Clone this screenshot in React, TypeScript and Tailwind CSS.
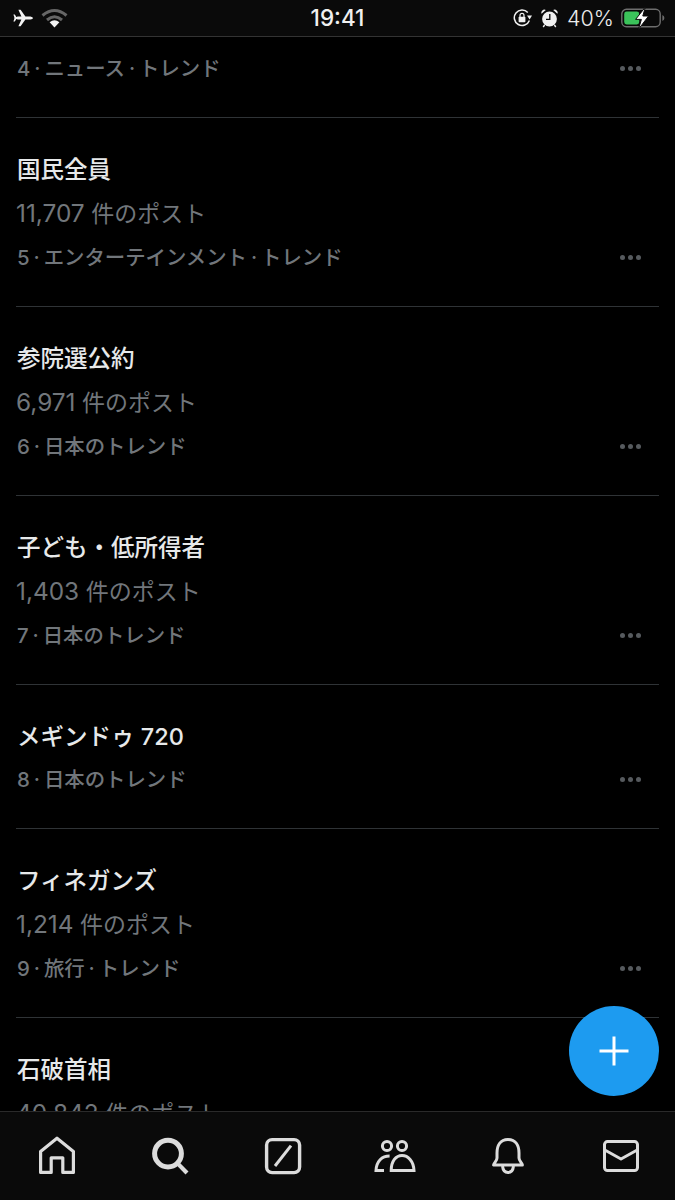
import React from 'react';

const trends = [
  { title: '国民全員', num: '11,707', meta: '5 · エンターテインメント · トレンド' },
  { title: '参院選公約', num: '6,971', meta: '6 · 日本のトレンド' },
  { title: '子ども・低所得者', num: '1,403', meta: '7 · 日本のトレンド' },
  { title: 'メギンドゥ 720', meta: '8 · 日本のトレンド' },
  { title: 'フィネガンズ', num: '1,214', meta: '9 · 旅行 · トレンド' },
  { title: '石破首相', num: '40,842', meta: '10 · 日本のトレンド' },
];

const StatusBar = () => (
  <div className="grid h-[37px] shrink-0 grid-cols-[1fr_auto_1fr] items-center border-b border-[#333333] bg-[#0a0a0a] px-[10px] text-[#ececec]">
    <div className="flex items-center gap-[8px] pl-[3px]">
      <svg width="20" height="18" viewBox="0 0 20 18" fill="#f2f2f2">
        <path d="M0.6 8.8 L2.4 8.8 L4.6 7.6 L8.4 7.4 L5.4 0.8 L7.6 0.8 L12.4 7.4 L17.4 7.4 Q20 8 20 9 Q20 10 17.4 10.6 L12.4 10.6 L7.6 17.2 L5.4 17.2 L8.4 10.6 L4.6 10.4 L2.4 9.2 L0.6 9.2 L1.6 9 Z M0.4 5.6 L1.8 5.6 L4 9 L1.8 12.4 L0.4 12.4 L1.6 9 Z" />
      </svg>
      <svg width="27" height="20" viewBox="0 0 27 20" fill="none">
        <path d="M1.5 7.5 Q13.5 -2.5 25.5 7.5" stroke="#666666" strokeWidth="3" />
        <path d="M6 12 Q13.5 5.5 21 12" stroke="#666666" strokeWidth="3" />
        <path d="M8.6 14.2 Q13.5 10.4 18.4 14.2 L13.5 19.4 Z" fill="#f2f2f2" />
      </svg>
    </div>
    <span className="text-[22.5px] font-medium text-[#f0f0f0]">19:41</span>
    <div className="flex items-center justify-end">
      <svg width="19" height="18" viewBox="0 0 19 18" fill="none" className="mr-[9px]">
        <path d="M16.4 11.5 A7.8 7.8 0 1 1 14.8 3.4" stroke="#f0f0f0" strokeWidth="1.5" />
        <path d="M14 6.5 L19 6.5 L16.6 10.4 Z" fill="#f0f0f0" />
        <rect x="5.6" y="7.8" width="6.8" height="5.4" rx="0.8" fill="#f0f0f0" />
        <path d="M7 8 V6.4 A2 2 0 0 1 11 6.4 V8" stroke="#f0f0f0" strokeWidth="1.2" />
      </svg>
      <svg width="17" height="19" viewBox="0 0 17 19" fill="none" className="mr-[9px]">
        <circle cx="8.5" cy="10" r="7.4" fill="#f0f0f0" />
        <path d="M8.8 5 V10.4 H5" stroke="#0a0a0a" strokeWidth="1.3" />
        <path d="M0.6 4.8 A3 3 0 0 1 4.8 1 Z M16.4 4.8 A3 3 0 0 0 12.2 1 Z" fill="#f0f0f0" />
        <path d="M3.6 16 L2.2 18 M13.4 16 L14.8 18" stroke="#f0f0f0" strokeWidth="1.4" />
      </svg>
      <span className="mr-[7px] text-[21.5px] font-light text-[#ededed]">40%</span>
      <svg width="44" height="24" viewBox="0 0 44 24" fill="none">
        <rect x="0.8" y="3.3" width="38.4" height="17.4" rx="4.6" stroke="#6e6e6e" strokeWidth="1.4" />
        <rect x="3.2" y="5.6" width="15" height="12.8" rx="2.4" fill="#3bc25a" />
        <path d="M41.4 9 Q43.4 10 43.4 12 Q43.4 14 41.4 15 Z" fill="#6e6e6e" />
        <path d="M24.4 1 L14.6 13.4 L20.4 13.4 L17.4 23.4 L27.6 10 L21.8 10 Z" fill="#ffffff" stroke="#0a0a0a" strokeWidth="1" />
      </svg>
    </div>
  </div>
);

const MetaLine = ({ meta }: { meta: string }) => (
  <div className="flex h-[32px] items-center justify-between pl-[1px] pr-[18px]">
    <p className="text-[20.4px] leading-[32px] font-medium text-[#71767b] [word-spacing:-1.5px]">{meta}</p>
    <div className="mb-[2px] flex gap-[3px]">
      <span className="size-[5px] rounded-full bg-[#565a5e]" />
      <span className="size-[5px] rounded-full bg-[#565a5e]" />
      <span className="size-[5px] rounded-full bg-[#565a5e]" />
    </div>
  </div>
);

const TrendRow = ({ title, num, meta }: { title: string; num?: string; meta: string }) => (
  <div className="mx-[16px] flex flex-col border-b border-[#2f3336] pt-[36px] pb-[32px]">
    <p className="h-[32px] pl-[1px] text-[23.5px] leading-[32px] font-medium text-[#e7e9ea]">{title}</p>
    {num && (
      <p className="mt-[11px] h-[33px] text-[23px] leading-[32px] text-[#71767b]">
        <span className="text-[24.4px]">{num}</span> 件のポスト
      </p>
    )}
    <div className={num ? 'mt-[12px]' : 'mt-[11px]'}>
      <MetaLine meta={meta} />
    </div>
  </div>
);

const iconClass = 'flex w-[42px] justify-center';

const TabBar = () => (
  <div className="flex h-[89px] shrink-0 items-start justify-between border-t border-[#2a2a2a] bg-[#0a0a0a] pl-[36px] pr-[33px] pt-[24px]">
    <div className={iconClass}>
      <svg width="38" height="40" viewBox="0 0 38 40" fill="none" stroke="#dcdcdc" strokeWidth="3.2" strokeLinejoin="round">
        <path d="M2.6 15.4 L19 2.2 L35.4 15.4 V36.4 H24.8 V21.8 H13.2 V36.4 H2.6 Z" />
      </svg>
    </div>
    <div className={iconClass}>
      <svg width="38" height="40" viewBox="0 0 38 40" fill="none" stroke="#dcdcdc" strokeWidth="5">
        <circle cx="17" cy="17.6" r="13.4" />
        <path d="M26.6 27.4 L36 37" strokeWidth="4.2" />
      </svg>
    </div>
    <div className={iconClass}>
      <svg width="38" height="40" viewBox="0 0 38 40" fill="none" stroke="#dcdcdc">
        <rect x="2.6" y="3.6" width="33" height="33" rx="5.5" strokeWidth="3.4" />
        <path d="M27 9.6 L11 30" strokeWidth="3" />
      </svg>
    </div>
    <div className={iconClass}>
      <svg width="42" height="40" viewBox="0 0 42 40" fill="none" stroke="#dcdcdc" strokeWidth="3">
        <circle cx="13" cy="10" r="4.6" />
        <circle cx="28" cy="10" r="4.6" />
        <path d="M15.6 20 C8 20 2.4 25 2 34.6 H10" />
        <path d="M17.2 34.6 C17.2 25 22 19.5 28 19.5 C34 19.5 39.6 25 40 34.6 Z" />
      </svg>
    </div>
    <div className={iconClass}>
      <svg width="34" height="40" viewBox="0 0 34 40" fill="none" stroke="#dcdcdc" strokeWidth="3">
        <path d="M17 3.5 C9 3.5 6 10 6 17 L6 22 C6 25 3 27 2.6 29 L31.4 29 C31 27 28 25 28 22 L28 17 C28 10 25 3.5 17 3.5 Z" strokeLinejoin="round" />
        <path d="M11.5 30 C12 34.5 14.5 36.5 17 36.5 C19.5 36.5 22 34.5 22.5 30" />
      </svg>
    </div>
    <div className={iconClass}>
      <svg width="38" height="40" viewBox="0 0 38 40" fill="none" stroke="#dcdcdc" strokeWidth="3" strokeLinejoin="round">
        <rect x="2.5" y="5.6" width="33" height="29" rx="3" />
        <path d="M2.8 14 L19 23 L35.2 14" />
      </svg>
    </div>
  </div>
);

export default function App() {
  return (
    <div
      className="relative flex h-[1200px] w-[675px] flex-col overflow-hidden bg-black"
      style={{ fontFamily: 'Inter, "Noto Sans CJK JP", sans-serif' }}
    >
      <StatusBar />
      <div className="min-h-0 flex-1 overflow-hidden">
        {/* first row is scrolled under the status bar, only its last line is left */}
        <div className="mx-[16px] border-b border-[#2f3336] pt-[16px] pb-[32px]">
          <MetaLine meta="4 · ニュース · トレンド" />
        </div>
        {trends.map((t) => (
          <TrendRow key={t.meta} title={t.title} num={t.num} meta={t.meta} />
        ))}
      </div>
      <TabBar />
      <button className="absolute left-[569px] top-[1006px] flex size-[90px] items-center justify-center rounded-full bg-[#1d9bf0]">
        <svg width="30" height="30" viewBox="0 0 30 30" stroke="#ffffff" strokeWidth="3">
          <path d="M15 0.5 V29.5 M0.5 15 H29.5" />
        </svg>
      </button>
    </div>
  );
}
